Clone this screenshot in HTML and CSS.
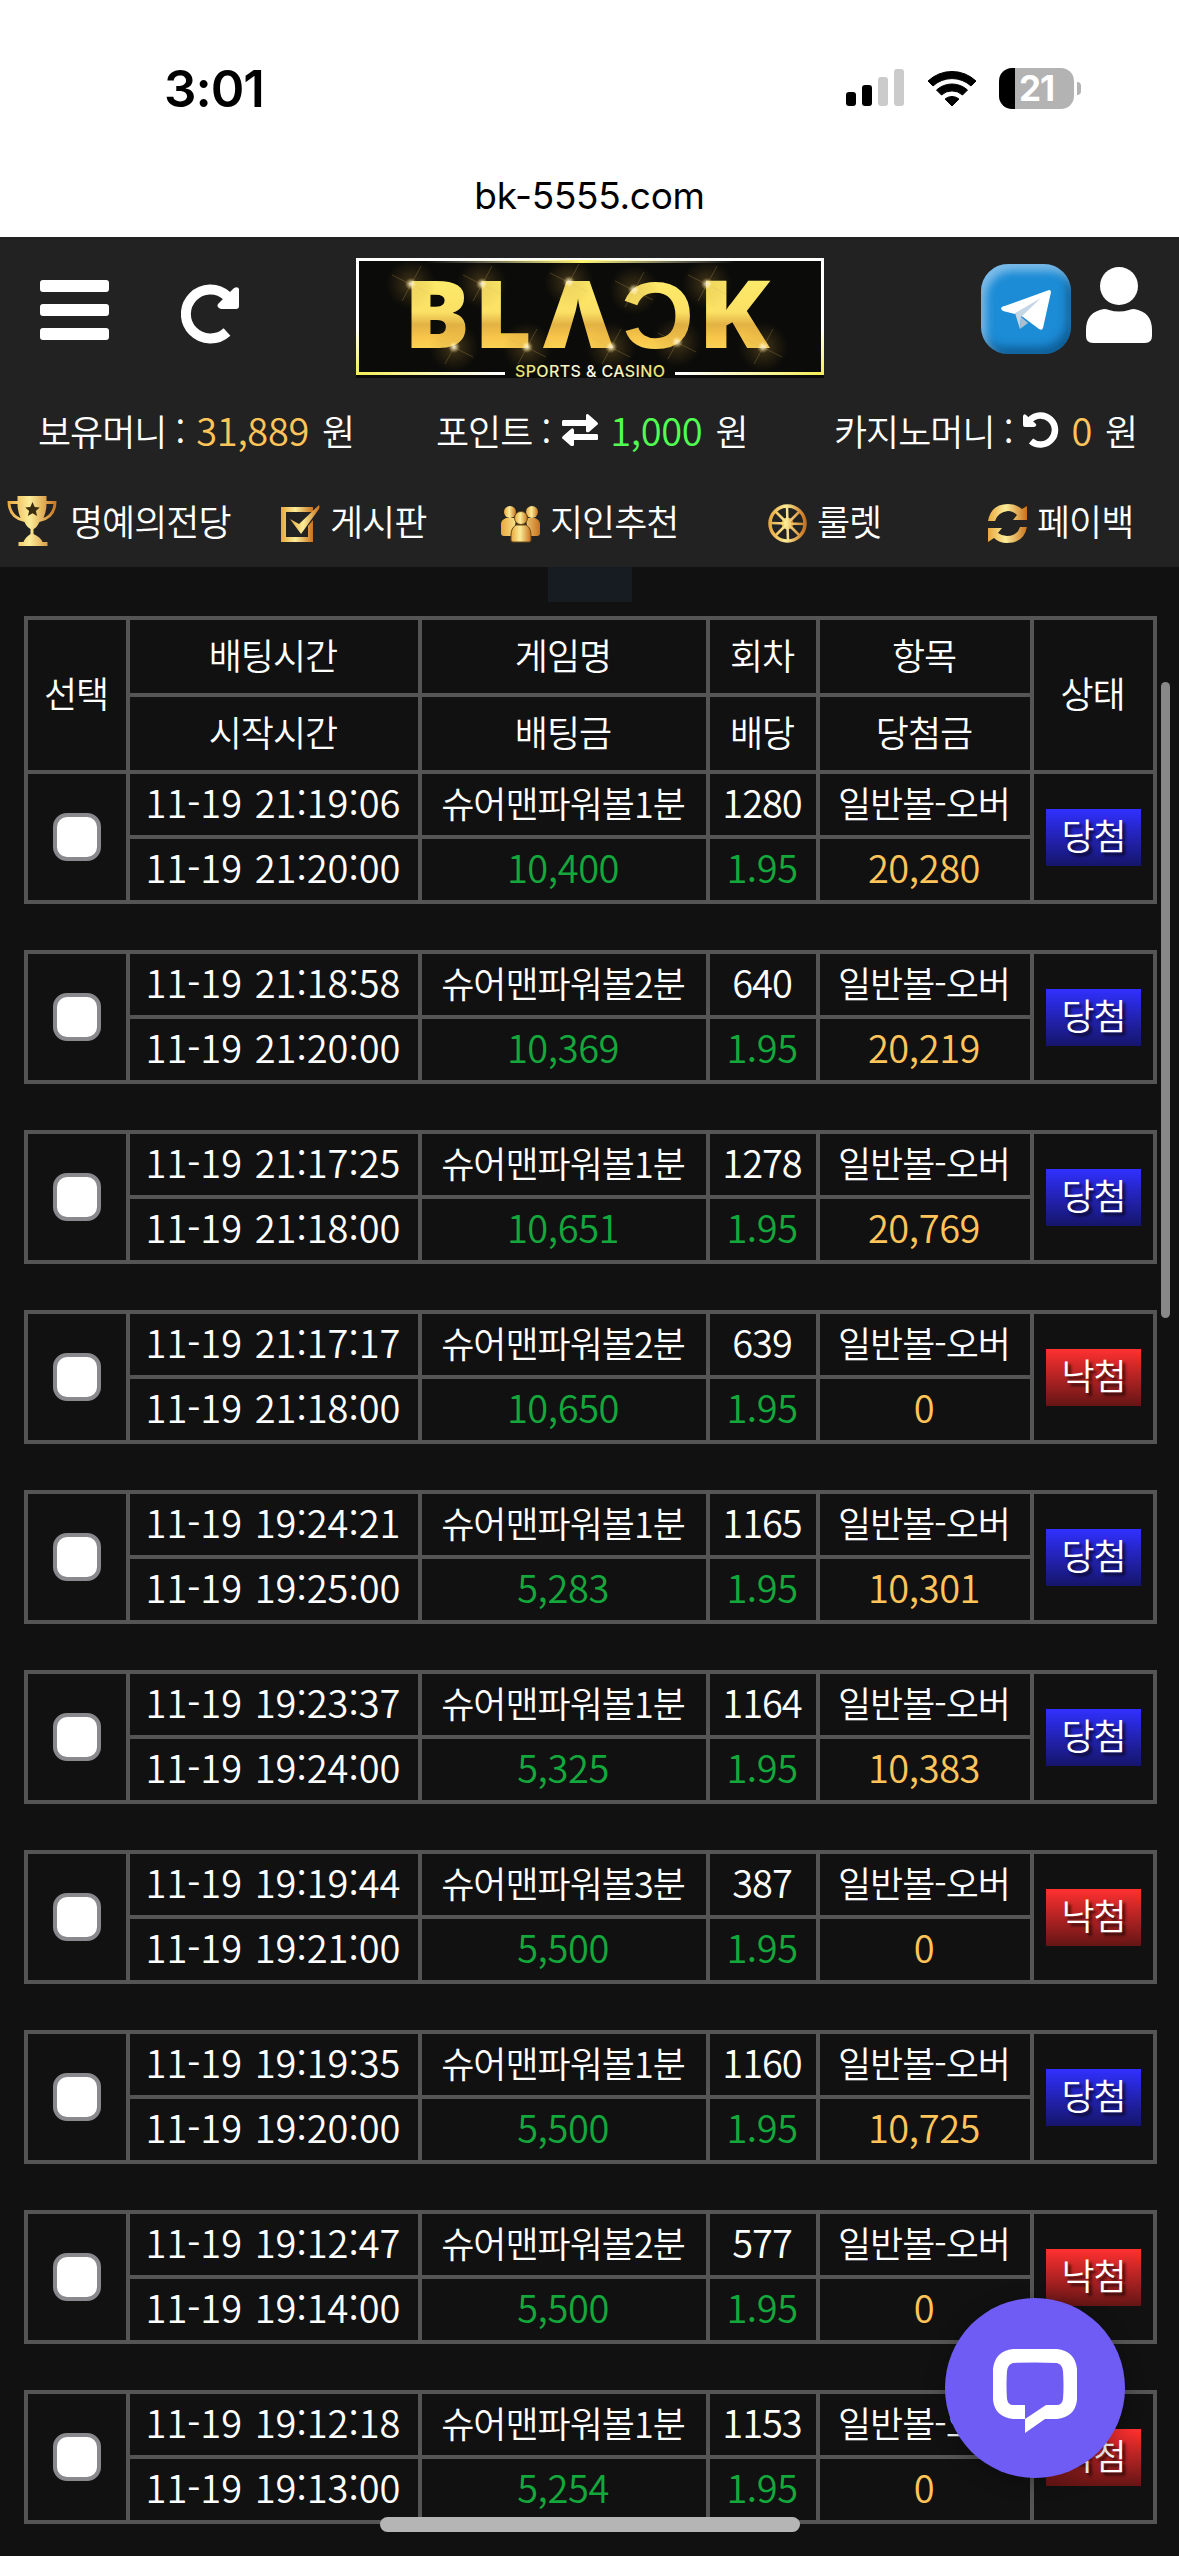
FILE: index.html
```
<!DOCTYPE html>
<html lang="ko">
<head>
    <meta charset="UTF-8">
    <meta name="viewport" content="width=device-width, initial-scale=1.0">
    <title>BLACK</title>

    <link rel="stylesheet" href="styles.css">
</head>
<body>
    <div class="status-bar">
        <span class="time">3:01</span>
        <div class="status-icons">
            <svg class="signal" viewBox="0 0 58 38">
                <rect x="0" y="23" width="10" height="14" rx="3"/>
                <rect x="16" y="16" width="10" height="21" rx="3"/>
                <rect x="32" y="8" width="10" height="29" rx="3" fill="#cbcbcb"/>
                <rect x="48" y="0" width="10" height="37" rx="3" fill="#cbcbcb"/>
            </svg>
            <svg class="wifi" viewBox="0 0 50 37">
                <path d="M1 11a35 35 0 0 1 48 0l-5 5a28 28 0 0 0-38 0z" stroke="#000" stroke-linejoin="round"/>
                <path d="M9.500 20a23 23 0 0 1 31 0l-5 5a15.500 15.500 0 0 0-21 0z" stroke="#000" stroke-linejoin="round"/>
                <path d="M18 29a11 11 0 0 1 14 0l-7 7z" stroke="#000" stroke-linejoin="round"/>
            </svg>
            <div class="battery"><span>21</span></div>
        </div>
    </div>
    <div class="url-bar">bk-5555.com</div>

    <header>
        <div class="top">
            <div class="left-menu">
                <svg class="icon-menu" viewBox="0 0 69 60">
                    <rect width="69" height="12" rx="3"/>
                    <rect y="24" width="69" height="12" rx="3"/>
                    <rect y="48" width="69" height="12" rx="3"/>
                </svg>
                <svg class="icon-reload" viewBox="0 0 58 60">
                    <path d="M46 48A24.500 24.500 0 1 1 46 12" fill="none" stroke="#fff" stroke-width="10"/>
                    <path d="M58 5v17q0 3-3 3H40q-5-2-3-5L53 4q4-2 5 1z"/>
                </svg>
            </div>
            <svg class="logo" viewBox="0 0 468 120">
                <defs>
                    <linearGradient id="gold" x1="0" y1="0" x2="0" y2="1">
                        <stop offset="0" stop-color="#fff56e"/>
                        <stop offset=".5" stop-color="#fbe065"/>
                        <stop offset=".6" stop-color="#e2b244"/>
                        <stop offset=".7" stop-color="#f8c64a"/>
                        <stop offset="1" stop-color="#fff06a"/>
                    </linearGradient>
                    <linearGradient id="frame" x1="0" y1="0" x2="0" y2="1">
                        <stop offset="0" stop-color="#fff"/>
                        <stop offset=".6" stop-color="#fff"/>
                        <stop offset="1" stop-color="#f4ee55"/>
                    </linearGradient>
                    <linearGradient id="frame-bottom" gradientUnits="userSpaceOnUse" x1="0" y1="0" x2="468" y2="0">
                        <stop offset="0" stop-color="#f4ee55"/>
                        <stop offset=".3" stop-color="#fff"/>
                        <stop offset=".7" stop-color="#fff"/>
                        <stop offset="1" stop-color="#f4ee55"/>
                    </linearGradient>
                    <linearGradient id="topline">
                        <stop offset="0" stop-color="#fff" stop-opacity="0"/>
                        <stop offset=".5" stop-color="#fff56e"/>
                        <stop offset="1" stop-color="#fff" stop-opacity="0"/>
                    </linearGradient>
                    <linearGradient id="sub">
                        <stop offset="0" stop-color="#e8e060"/>
                        <stop offset=".5" stop-color="#fff"/>
                        <stop offset="1" stop-color="#e8e060"/>
                    </linearGradient>
                    <radialGradient id="glow">
                        <stop offset="0" stop-color="#fff"/>
                        <stop offset=".12" stop-color="#ffe9a0" stop-opacity=".6"/>
                        <stop offset=".25" stop-color="#c89c40" stop-opacity=".22"/>
                        <stop offset="1" stop-color="#a07820" stop-opacity="0"/>
                    </radialGradient>
                    <g id="spark">
                        <circle r="25" fill="url(#glow)"/>
                        <path d="M-9 17L10-18M-19-9L19 10" stroke="#d8b460" stroke-opacity=".25"/>
                    </g>
                </defs>
                <rect width="468" height="120" fill="#0b0b09"/>
                <path d="M1.500 116V1.500H466.500V116" fill="none" stroke="url(#frame)" stroke-width="3"/>
                <path d="M0 114h149v3H0zM319 114h149v3H319z" fill="url(#frame-bottom)"/>
                <rect x="70" y="2" width="310" height="3" fill="url(#topline)"/>
                <g class="logo-text" fill="url(#gold)">
                    <text x="48" y="90" textLength="66" lengthAdjust="spacingAndGlyphs">B</text>
                    <text x="118" y="90" textLength="58" lengthAdjust="spacingAndGlyphs">L</text>
                    <text x="187" y="90" textLength="70" lengthAdjust="spacingAndGlyphs">Λ</text>
                    <text x="266" y="90" textLength="72" lengthAdjust="spacingAndGlyphs">Ɔ</text>
                    <text x="342" y="90" textLength="72" lengthAdjust="spacingAndGlyphs">K</text>
                </g>
                <use href="#spark" x="55" y="26"/>
                <use href="#spark" x="126" y="26"/>
                <use href="#spark" x="98" y="89"/>
                <use href="#spark" x="171" y="89"/>
                <use href="#spark" x="213" y="24"/>
                <use href="#spark" x="255" y="89"/>
                <use href="#spark" x="278" y="32"/>
                <use href="#spark" x="321" y="84"/>
                <use href="#spark" x="351" y="26"/>
                <use href="#spark" x="407" y="89"/>
                <text class="logo-sub" x="159" y="119" textLength="150" fill="url(#sub)">SPORTS &amp; CASINO</text>
            </svg>
            <div class="right-menu">
                <div class="telegram">
                    <svg viewBox="0 0 50 41">
                        <path d="M1 18L48 1q2 0 2 2l-8 36q-1 3-4 1L18 25z" fill="#fff"/>
                        <path d="M1 18q-2 2 1 4l12 3L40 9z" fill="#fff"/>
                        <path d="M14 24L40 9 20 28l-1 12z" fill="#c5d6e6"/>
                        <path d="M19 40l1-12 7 6z" fill="#a9bfd2"/>
                    </svg>
                </div>
                <svg class="icon-user" viewBox="0 0 66 76">
                    <ellipse cx="33" cy="19" rx="19" ry="19"/>
                    <path d="M18 42q3 0 5 1 10 3 20 0 2-1 5-1 18 3 18 21v6q0 7-7 7H7q-7 0-7-7v-6q0-18 18-21z"/>
                </svg>
            </div>
        </div>

        <div class="money">
            <div class="money-item">
                <span>보유머니 :</span>
                <b class="gold">31,889</b>
                <span>원</span>
            </div>
            <div class="money-item">
                <span>포인트 :</span>
                <svg class="icon-swap" viewBox="0 0 36 32">
                    <path d="M1 6h23V1q1-2 3 0l8 7q2 2 0 3l-8 7q-3 1-3-1v-5H1q-1 0-1-1V7zM35 20H12v-4q-1-3-3-1l-8 7q-2 2 0 3l8 7q2 1 3-1v-5h23q1 0 1-1v-4z"/>
                </svg>
                <b class="green">1,000</b>
                <span>원</span>
            </div>
            <div class="money-item">
                <span>카지노머니 :</span>
                <svg class="icon-undo" viewBox="0 0 36 36">
                    <path d="M8 29A14.500 14.500 0 1 0 7 8" fill="none" stroke="#fff" stroke-width="6.500"/>
                    <path d="M0 4v9q0 2 2 2h9q3-1 2-3L3 3Q1 1 0 4z"/>
                </svg>
                <b class="gold">0</b>
                <span>원</span>
            </div>
        </div>

        <nav>
            <svg class="defs" viewBox="0 0 1 1">
                <linearGradient id="g2">
                    <stop offset="0" stop-color="#e9a83f"/>
                    <stop offset=".45" stop-color="#fbec98"/>
                    <stop offset="1" stop-color="#c9721d"/>
                </linearGradient>
            </svg>
            <a class="nav-trophy">
                <svg viewBox="0 0 49 50">
                    <path fill-rule="evenodd" d="M10 0h29v5h10q0 18-17 21-3 6-6 7v5q7 3 9 8h5v4H11v-4h5q2-5 7-8v-5q-4-2-6-7Q0 23 0 5h10zM3 8q1 10 10 14-3-7-3-14zM46 8h-7q0 7-3 14 9-4 10-14z"/>
                    <path d="M25 6l2.200 5 5 .5-3.800 3.500 1.200 5-4.600-2.700-4.600 2.700 1.200-5-3.800-3.500 5-.5z" fill="#3a2c10"/>
                </svg>
                명예의전당
            </a>
            <a class="nav-board">
                <svg viewBox="0 0 39 39">
                    <path d="M0 3h32v5H5v25h22V22l5-6v22H0z"/>
                    <path d="M9 15l9 5L38 1q1 1 0 4L20 30z"/>
                </svg>
                게시판
            </a>
            <a class="nav-friend">
                <svg viewBox="0 0 39 39">
                    <circle cx="9" cy="8" r="6"/>
                    <circle cx="31" cy="8" r="6"/>
                    <path d="M5 14h10l-2 18H3q-3 0-3-3v-9q0-4 5-6zM25 14h9q5 2 5 6v9q0 3-3 3h-9z"/>
                    <g stroke="#6b4a18"><circle cx="20" cy="14" r="6.500"/><path d="M15 21h10q5 3 5 10v5q0 2-2 2H12q-2 0-2-2v-5q0-7 5-10z"/></g>
                </svg>
                지인추천
            </a>
            <a class="nav-wheel">
                <svg viewBox="0 0 39 39" stroke="url(#g2)">
                    <circle cx="19.500" cy="19.500" r="17.500" stroke-width="3.500"/>
                    <circle cx="19.500" cy="19.500" r="4" stroke-width="4"/>
                    <path d="M2 19L37 20M19 2L20 37M7 7l25 25M32 7L7 32" stroke-width="2.500"/>
                </svg>
                룰렛
            </a>
            <a class="nav-payback">
                <svg viewBox="0 0 39 39">
                    <path d="M0 17Q3 0 20 0q8 0 14 5l5-3v14H25l4-5q-4-4-9-4-10 1-13 10zM39 23q-3 16-20 16-8 0-13-5l-6 4V24h14l-4 5q4 3 9 3 10 0 13-9z"/>
                </svg>
                페이백
            </a>
        </nav>
    </header>

    <main>
        <div class="tab-block"></div>
        <table>
            <colgroup>
                <col class="c1"><col class="c2"><col class="c3"><col class="c4"><col class="c5"><col class="c6">
            </colgroup>
            <tr class="head"><th rowspan="2">선택</th><th>배팅시간</th><th>게임명</th><th>회차</th><th>항목</th><th rowspan="2">상태</th></tr>
            <tr class="head"><th>시작시간</th><th>배팅금</th><th>배당</th><th>당첨금</th></tr>

            <tr><td rowspan="2"><input type="checkbox"></td><td class="date">11-19 21:19:06</td><td>슈어맨파워볼1분</td><td class="num">1280</td><td>일반볼-오버</td><td rowspan="2"><span class="badge win">당첨</span></td></tr>
            <tr><td class="date">11-19 21:20:00</td><td class="bet">10,400</td><td class="bet">1.95</td><td class="prize">20,280</td></tr>
            <tr class="gap"><td colspan="6"></td></tr>

            <tr><td rowspan="2"><input type="checkbox"></td><td class="date">11-19 21:18:58</td><td>슈어맨파워볼2분</td><td class="num">640</td><td>일반볼-오버</td><td rowspan="2"><span class="badge win">당첨</span></td></tr>
            <tr><td class="date">11-19 21:20:00</td><td class="bet">10,369</td><td class="bet">1.95</td><td class="prize">20,219</td></tr>
            <tr class="gap"><td colspan="6"></td></tr>

            <tr><td rowspan="2"><input type="checkbox"></td><td class="date">11-19 21:17:25</td><td>슈어맨파워볼1분</td><td class="num">1278</td><td>일반볼-오버</td><td rowspan="2"><span class="badge win">당첨</span></td></tr>
            <tr><td class="date">11-19 21:18:00</td><td class="bet">10,651</td><td class="bet">1.95</td><td class="prize">20,769</td></tr>
            <tr class="gap"><td colspan="6"></td></tr>

            <tr><td rowspan="2"><input type="checkbox"></td><td class="date">11-19 21:17:17</td><td>슈어맨파워볼2분</td><td class="num">639</td><td>일반볼-오버</td><td rowspan="2"><span class="badge lose">낙첨</span></td></tr>
            <tr><td class="date">11-19 21:18:00</td><td class="bet">10,650</td><td class="bet">1.95</td><td class="prize">0</td></tr>
            <tr class="gap"><td colspan="6"></td></tr>

            <tr><td rowspan="2"><input type="checkbox"></td><td class="date">11-19 19:24:21</td><td>슈어맨파워볼1분</td><td class="num">1165</td><td>일반볼-오버</td><td rowspan="2"><span class="badge win">당첨</span></td></tr>
            <tr><td class="date">11-19 19:25:00</td><td class="bet">5,283</td><td class="bet">1.95</td><td class="prize">10,301</td></tr>
            <tr class="gap"><td colspan="6"></td></tr>

            <tr><td rowspan="2"><input type="checkbox"></td><td class="date">11-19 19:23:37</td><td>슈어맨파워볼1분</td><td class="num">1164</td><td>일반볼-오버</td><td rowspan="2"><span class="badge win">당첨</span></td></tr>
            <tr><td class="date">11-19 19:24:00</td><td class="bet">5,325</td><td class="bet">1.95</td><td class="prize">10,383</td></tr>
            <tr class="gap"><td colspan="6"></td></tr>

            <tr><td rowspan="2"><input type="checkbox"></td><td class="date">11-19 19:19:44</td><td>슈어맨파워볼3분</td><td class="num">387</td><td>일반볼-오버</td><td rowspan="2"><span class="badge lose">낙첨</span></td></tr>
            <tr><td class="date">11-19 19:21:00</td><td class="bet">5,500</td><td class="bet">1.95</td><td class="prize">0</td></tr>
            <tr class="gap"><td colspan="6"></td></tr>

            <tr><td rowspan="2"><input type="checkbox"></td><td class="date">11-19 19:19:35</td><td>슈어맨파워볼1분</td><td class="num">1160</td><td>일반볼-오버</td><td rowspan="2"><span class="badge win">당첨</span></td></tr>
            <tr><td class="date">11-19 19:20:00</td><td class="bet">5,500</td><td class="bet">1.95</td><td class="prize">10,725</td></tr>
            <tr class="gap"><td colspan="6"></td></tr>

            <tr><td rowspan="2"><input type="checkbox"></td><td class="date">11-19 19:12:47</td><td>슈어맨파워볼2분</td><td class="num">577</td><td>일반볼-오버</td><td rowspan="2"><span class="badge lose">낙첨</span></td></tr>
            <tr><td class="date">11-19 19:14:00</td><td class="bet">5,500</td><td class="bet">1.95</td><td class="prize">0</td></tr>
            <tr class="gap"><td colspan="6"></td></tr>

            <tr><td rowspan="2"><input type="checkbox"></td><td class="date">11-19 19:12:18</td><td>슈어맨파워볼1분</td><td class="num">1153</td><td>일반볼-오버</td><td rowspan="2"><span class="badge lose">낙첨</span></td></tr>
            <tr><td class="date">11-19 19:13:00</td><td class="bet">5,254</td><td class="bet">1.95</td><td class="prize">0</td></tr>
        </table>
    </main>

    <div class="scrollbar"></div>
    <div class="chat-button">
        <svg viewBox="0 0 84 84">
            <path d="M20 0Q42-1 64 0q18 2 20 20 1 16 0 31-2 17-20 19H52L32 84V56H20q-5 0-6-6-1-13 0-28 1-7 6-8 22-1 44 0 5 1 6 8 1 15 0 28-1 6-6 6H53L32 70H20Q2 68 0 51q-1-15 0-31Q2 2 20 0z" fill-rule="evenodd"/>
        </svg>
    </div>
    <div class="home-indicator"></div>
</body>
</html>
```
FILE: styles.css
```
* {
    box-sizing: border-box;
}
body {
    margin: 0;
    width: 1179px;
    height: 2556px;
    overflow: hidden;
    position: relative;
    background-color: #111;
    color: #fff;
    font-family: "Noto Sans CJK KR", sans-serif;
    font-size: 36px;
    font-weight: 350;
    letter-spacing: -1px;
}
svg {
    display: block;
    fill: #fff;
    flex-shrink: 0;
}

/* 상태바 */
.status-bar {
    height: 158px;
    padding: 18px 105px 0 164px;
    background-color: #fff;
    color: #000;
    display: flex;
    justify-content: space-between;
    align-items: center;
    font-family: Inter, sans-serif;
}
.time {
    font-size: 51px;
    font-weight: 600;
    letter-spacing: -1px;
}
.status-icons {
    display: flex;
    align-items: center;
}
.signal {
    width: 58px;
    height: 38px;
    fill: #000;
    margin-right: 23px;
}
.wifi {
    width: 50px;
    height: 37px;
    fill: #000;
    margin-right: 22px;
}
.battery {
    position: relative;
    width: 75px;
    height: 41px;
    border-radius: 13px;
    background: linear-gradient(90deg, #000 16px, #b3b3b3 16px);
    color: #fff;
    font-size: 35px;
    font-weight: 700;
    line-height: 41px;
    text-align: center;
}
.battery::after {
    content: "";
    position: absolute;
    left: 78px;
    top: 14px;
    width: 4px;
    height: 13px;
    border-radius: 0 4px 4px 0;
    background-color: #b3b3b3;
}
.url-bar {
    height: 79px;
    background-color: #fff;
    color: #000;
    font-family: Inter, sans-serif;
    font-size: 37px;
    font-weight: 400;
    letter-spacing: -0.3px;
    line-height: 76px;
    text-align: center;
}

/* 헤더 */
header {
    height: 330px;
    background-color: #222;
}
.top {
    height: 150px;
    padding: 21px 27px 0 40px;
    display: flex;
    justify-content: space-between;
    align-items: flex-start;
}
.left-menu {
    display: flex;
    width: 316px;
    padding-top: 22px;
}
.icon-menu {
    width: 69px;
    height: 60px;
    margin-right: 72px;
}
.icon-reload {
    width: 58px;
    height: 60px;
    margin-top: 4px;
}
.logo {
    width: 468px;
    height: 120px;
}
.logo-text {
    font-family: "Open Sans", sans-serif;
    font-size: 94px;
    font-weight: 800;
    letter-spacing: 0;
}
.logo-sub {
    font-family: Inter, sans-serif;
    font-size: 16px;
    font-weight: 500;
    letter-spacing: 0;
}
.right-menu {
    width: 328px;
    display: flex;
    justify-content: flex-end;
    padding-top: 6px;
}
.telegram {
    width: 90px;
    height: 90px;
    margin-right: 15px;
    border-radius: 27px;
    background-color: #1c8cd6;
    box-shadow: inset 5px 7px 8px rgba(190, 220, 245, 0.6), inset -4px -7px 8px rgba(0, 50, 90, 0.5);
    display: flex;
    justify-content: center;
    align-items: center;
}
.telegram svg {
    width: 50px;
    height: 41px;
}
.icon-user {
    width: 66px;
    height: 76px;
    margin-top: 3px;
}

.money {
    height: 90px;
    padding: 0 0 0 38px;
    display: flex;
    align-items: center;
}
.money-item {
    width: 398px;
    display: flex;
    align-items: center;
    line-height: 50px;
    padding-bottom: 4px;
    white-space: nowrap;
}
.money-item:last-child {
    width: 345px;
}
.money b {
    font-size: 38px;
    font-weight: 350;
    letter-spacing: -0.3px;
    margin: 0 13px 0 12px;
}
.gold, .prize {
    color: #ffc55a;
}
.green {
    color: #50ff50;
}
.icon-swap {
    width: 36px;
    height: 32px;
    margin-left: 12px;
}
.icon-undo {
    width: 36px;
    height: 36px;
    margin-left: 11px;
}

nav {
    height: 90px;
    display: flex;
    padding: 0 0 4px 7px;
}
nav a {
    display: flex;
    flex-shrink: 0;
    align-items: center;
    gap: 10px;
    width: 220px;
}
nav .defs {
    width: 0;
    height: 0;
}
nav a svg {
    width: 39px;
    height: 39px;
    margin-top: 6px;
    fill: url(#g2);
}
nav .nav-trophy {
    width: 274px;
    gap: 13px;
}
.nav-trophy svg {
    width: 50px;
    height: 50px;
    margin-top: 2px;
}
nav .nav-friend {
    width: 267px;
}
nav .nav-wheel svg {
    fill: none;
}
nav .nav-payback {
    width: 191px;
}

/* 배팅내역 */
.tab-block {
    width: 84px;
    height: 35px;
    margin-left: 548px;
    background-color: #171b22;
}
main {
    height: 1989px;
}
table {
    width: 1129px;
    margin: 14px 0 0 24px;
    border-collapse: collapse;
    table-layout: fixed;
}
.c1 { width: 102px; }
.c2 { width: 292px; }
.c3 { width: 288px; }
.c4 { width: 110px; }
.c5 { width: 214px; }
.c6 { width: 123px; }
tr {
    height: 65px;
}
tr.head {
    height: 77px;
}
tr.gap {
    height: 50px;
}
th, td {
    padding: 0 2px 6px 0;
    border: 4px solid #555;
    font-weight: 350;
    line-height: 48px;
    text-align: center;
    white-space: nowrap;
}
td[rowspan], .gap td {
    padding: 0;
}
.gap td {
    border-left: none;
    border-right: none;
}
.date, .num, .bet, .prize {
    font-size: 38px;
}
.date {
    letter-spacing: 0;
    word-spacing: 2px;
}
.bet, .prize {
    letter-spacing: -0.4px;
}
.bet {
    color: #14a83c;
}
input[type="checkbox"] {
    appearance: none;
    display: block;
    width: 48px;
    height: 48px;
    margin: 0 auto;
    border: 4px solid #8a8a8e;
    border-radius: 14px;
    background-color: #fff;
}
.badge {
    display: block;
    width: 95px;
    height: 57px;
    margin: 0 auto;
    line-height: 51px;
    text-shadow: 3px 3px 3px rgba(0, 0, 0, 0.7);
}
.win {
    background: linear-gradient(#3030ff, #15156a);
}
.lose {
    background: linear-gradient(#ff3030, #651515);
}

.scrollbar {
    position: absolute;
    left: 1161px;
    top: 682px;
    width: 9px;
    height: 636px;
    border-radius: 5px;
    background-color: #888;
}
.chat-button {
    position: absolute;
    left: 945px;
    top: 2298px;
    width: 180px;
    height: 180px;
    border-radius: 50%;
    background-color: #6f5cf5;
    box-shadow: 0 4px 20px rgba(0, 0, 0, 0.3);
    display: flex;
    justify-content: center;
    align-items: center;
}
.chat-button svg {
    width: 84px;
    height: 84px;
    margin-top: 6px;
}
.home-indicator {
    position: absolute;
    left: 380px;
    top: 2517px;
    width: 420px;
    height: 15px;
    border-radius: 8px;
    background-color: #b5b5b5;
}
```
